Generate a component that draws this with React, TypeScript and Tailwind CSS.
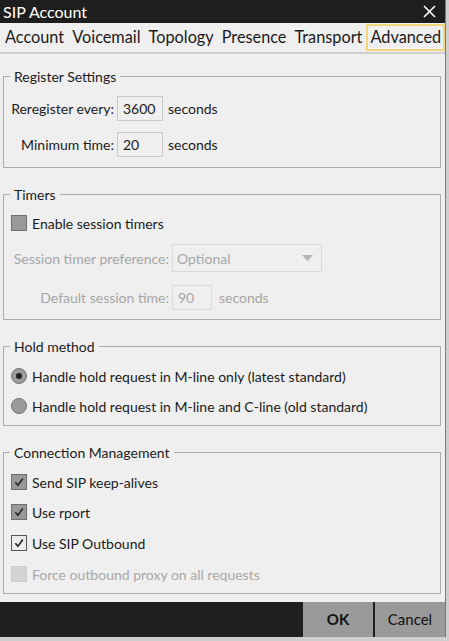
import React from "react";

const tabs = ["Account", "Voicemail", "Topology", "Presence", "Transport", "Advanced"];

function CheckBox({ state }: { state: "off" | "on" | "focus" | "disabled" }) {
    const box =
        state === "disabled"
            ? "bg-[#d4d4d4] border-[#cbcbcb]"
            : state === "focus"
              ? "bg-[#ececec] border-[#555555]"
              : "bg-[#999999] border-[#6f6f6f]";
    return (
        <span className={`w-[16px] h-[16px] border shrink-0 flex items-center justify-center ${box}`}>
            {(state === "on" || state === "focus") && (
                <svg width="12" height="12" viewBox="0 0 12 12">
                    <path d="M2.3 6.2 L5 9.2 L9.8 2.6" fill="none" stroke="#262626" strokeWidth="1.7" />
                </svg>
            )}
        </span>
    );
}

function Radio({ on }: { on?: boolean }) {
    return (
        <span className="w-[16px] h-[16px] rounded-full bg-[#9b9b9b] border border-[#737373] shrink-0 flex items-center justify-center">
            {on && <span className="w-[6px] h-[6px] rounded-full bg-[#1e1e1e]" />}
        </span>
    );
}

function Group({ title, children }: { title: string; children: React.ReactNode }) {
    return (
        <fieldset className="border border-[#ababab] mx-0">
            <legend className="ml-[6px] px-[4px] leading-[17px] text-[#1b1b1b]">{title}</legend>
            {children}
        </fieldset>
    );
}

function Field({ value, w, disabled }: { value: string; w: string; disabled?: boolean }) {
    return (
        <span
            className={`${w} h-[25px] border flex items-center pl-[5px] ${
                disabled ? "border-[#dadada] text-[#a6a6a6]" : "border-[#c9c9c9] text-[#1b1b1b]"
            }`}
        >
            {value}
        </span>
    );
}

export default function App() {
    return (
        <div className="w-[449px] h-[641px] bg-[#cfcfcf] font-['Lato',sans-serif] text-[14px] text-[#1b1b1b]">
            <div className="w-[446px] h-[637px] bg-[#efefef] border-r border-[#7a7a7a] flex flex-col">
                {/* title bar */}
                <div className="h-[23px] bg-[#1e1e1e] flex items-center justify-between pl-[3px] pr-[9px]">
                    <span className="text-white text-[16px] leading-none">SIP Account</span>
                    <svg width="13" height="13" viewBox="0 0 13 13">
                        <path d="M1 1 L12 12 M12 1 L1 12" stroke="#ffffff" strokeWidth="1.6" />
                    </svg>
                </div>

                {/* tabs */}
                <div className="h-[31px] flex items-center pl-[1px] border-b-2 border-[#d0d0d0] text-[16.3px] text-[#1b1b1b]">
                    {tabs.map((t) => (
                        <span
                            key={t}
                            className={`h-[27px] flex items-center px-[2px] border-2 whitespace-nowrap ${
                                t === "Advanced" ? "border-[#f2d67c]" : "border-transparent"
                            }`}
                        >
                            {t}
                        </span>
                    ))}
                </div>

                <div className="flex flex-col pl-[3px] pr-[4px] pt-[14px]">
                    <Group title="Register Settings">
                        <div className="flex flex-col pt-[7px] pb-[7px]">
                            <div className="h-[32px] flex items-center">
                                <span className="w-[113px] text-right pr-[3px]">Reregister every:</span>
                                <Field value="3600" w="w-[46px]" />
                                <span className="ml-[5px]">seconds</span>
                            </div>
                            <div className="h-[32px] mt-[4px] flex items-center">
                                <span className="w-[113px] text-right pr-[3px]">Minimum time:</span>
                                <Field value="20" w="w-[46px]" />
                                <span className="ml-[5px]">seconds</span>
                            </div>
                        </div>
                    </Group>

                    <div className="mt-[18px]">
                        <Group title="Timers">
                            <div className="flex flex-col pt-[5px] pb-[7px]">
                                <div className="h-[30px] flex items-center pl-[7px] gap-[5px]">
                                    <CheckBox state="off" />
                                    <span>Enable session timers</span>
                                </div>
                                <div className="h-[30px] mt-[5px] flex items-center text-[#a6a6a6]">
                                    <span className="w-[168px] text-right pr-[3px]">Session timer preference:</span>
                                    <span className="w-[150px] h-[28px] border border-[#dadada] flex items-center justify-between pl-[4px] pr-[8px]">
                                        Optional
                                        <svg width="11" height="6" viewBox="0 0 11 6">
                                            <path d="M0 0 L11 0 L5.5 6 Z" fill="#b5b5b5" />
                                        </svg>
                                    </span>
                                </div>
                                <div className="h-[30px] mt-[9px] flex items-center text-[#a6a6a6]">
                                    <span className="w-[168px] text-right pr-[3px]">Default session time:</span>
                                    <Field value="90" w="w-[40px]" disabled />
                                    <span className="ml-[7px]">seconds</span>
                                </div>
                            </div>
                        </Group>
                    </div>

                    <div className="mt-[18px]">
                        <Group title="Hold method">
                            <div className="flex flex-col pt-[6px] pb-[4px] pl-[7px]">
                                <div className="h-[30px] flex items-center gap-[5px]">
                                    <Radio on />
                                    <span>Handle hold request in M-line only (latest standard)</span>
                                </div>
                                <div className="h-[30px] flex items-center gap-[5px]">
                                    <Radio />
                                    <span>Handle hold request in M-line and C-line (old standard)</span>
                                </div>
                            </div>
                        </Group>
                    </div>

                    <div className="mt-[18px]">
                        <Group title="Connection Management">
                            <div className="flex flex-col pt-[6px] pb-[4px] pl-[7px]">
                                <div className="h-[30px] flex items-center gap-[5px]">
                                    <CheckBox state="on" />
                                    <span>Send SIP keep-alives</span>
                                </div>
                                <div className="h-[30px] flex items-center gap-[5px]">
                                    <CheckBox state="on" />
                                    <span>Use rport</span>
                                </div>
                                <div className="h-[30px] mt-[1px] flex items-center gap-[5px]">
                                    <CheckBox state="focus" />
                                    <span>Use SIP Outbound</span>
                                </div>
                                <div className="h-[30px] mt-[1px] flex items-center gap-[5px] text-[#a8a8a8]">
                                    <CheckBox state="disabled" />
                                    <span>Force outbound proxy on all requests</span>
                                </div>
                            </div>
                        </Group>
                    </div>
                </div>

                {/* footer */}
                <div className="mt-auto h-[35px] bg-[#1f1f1f] flex justify-end gap-[2px]">
                    <span className="w-[70px] bg-[#9a9a9a] flex items-center justify-center font-bold text-[15px] text-[#111]">
                        OK
                    </span>
                    <span className="w-[70px] bg-[#9a9a9a] flex items-center justify-center text-[15px] text-[#111]">
                        Cancel
                    </span>
                </div>
            </div>
        </div>
    );
}
